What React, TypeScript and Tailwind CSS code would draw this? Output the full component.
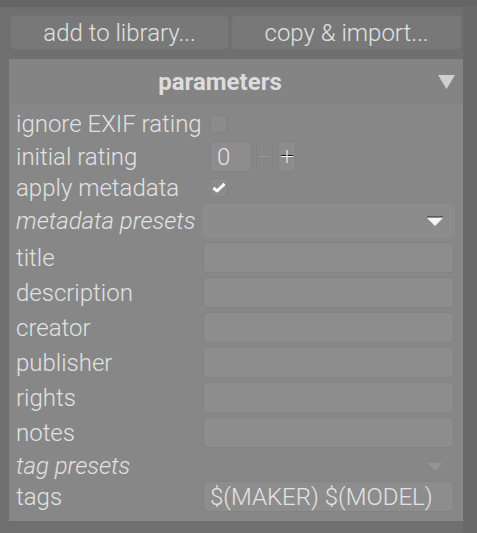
import React from 'react';

const ROW = 'flex items-center h-[31px]';

function Label({ children, italic = false }: { children: React.ReactNode; italic?: boolean }) {
    return (
        <span className={`w-[186px] shrink-0 whitespace-nowrap text-[24px] leading-none text-[#e2e2e2] ${italic ? 'italic' : ''}`}>
            {children}
        </span>
    );
}

function Entry({ value = '' }: { value?: string }) {
    return (
        <div className="ml-[1px] flex-1 h-full mr-[1px] rounded-[4px] bg-[#8d8d8d] border border-[#838383] flex items-center px-[6px] text-[24px] text-[#e4e4e4] whitespace-nowrap">
            {value}
        </div>
    );
}

function DropArrow({ dim = false }: { dim?: boolean }) {
    return (
        <svg width="16" height="10" viewBox="0 0 16 10">
            {!dim && <rect x="0" y="0" width="16" height="1" fill="#5a5a5a" />}
            <polygon points="0,2 16,2 8,10" fill={dim ? '#939393' : '#f4f4f4'} />
        </svg>
    );
}

export default function App() {
    const fields = ['title', 'description', 'creator', 'publisher', 'rights', 'notes'];

    return (
        <div className="w-[477px] h-[533px] bg-[#6f6f6f] flex flex-col font-['Roboto',sans-serif] font-light overflow-hidden">
            <div className="h-[7px] bg-[#656565] shrink-0" />

            <div className="flex flex-1">
                <div className="w-[463px] flex flex-col">
                    {/* import buttons */}
                    <div className="flex gap-[2px] pl-[10px] pr-[1px] mt-[8px]">
                        <button className="w-[219px] h-[35px] rounded-[5px] bg-[#787878] border border-[#727272] text-[24px] leading-none text-[#e2e2e2] font-light">
                            add to library...
                        </button>
                        <button className="flex-1 h-[35px] rounded-[5px] bg-[#787878] border border-[#727272] text-[24px] leading-none text-[#e2e2e2] font-light">
                            copy &amp; import...
                        </button>
                    </div>

                    {/* parameters panel */}
                    <div className="ml-[9px] mt-[9px] flex flex-col">
                        <div className="h-[45px] bg-[#848484] flex items-center">
                            <span className="flex-1 text-center text-[24px] leading-none font-bold text-[#dddddd] pl-[1px]">parameters</span>
                            <span className="w-[33px] flex justify-end pr-[8px]">
                                <svg width="17" height="14" viewBox="0 0 17 14">
                                    <polygon points="0,0 17,0 8.5,14" fill="#cfcfcf" />
                                </svg>
                            </span>
                        </div>

                        <div className="bg-[#878787] flex flex-col pl-[7px] pt-[4px] pb-[9px] pr-[8px]">
                            <div className={ROW}>
                                <Label>ignore EXIF rating</Label>
                                <div className="ml-[8px] w-[18px] h-[18px] rounded-[3px] bg-[#8b8b8b] border border-[#818181]" />
                            </div>

                            <div className={`${ROW} mt-[2px]`}>
                                <Label>initial rating</Label>
                                <div className="ml-[8px] w-[42px] h-full rounded-[4px] bg-[#8d8d8d] border border-[#838383] flex items-center pl-[6px] text-[24px] text-[#e4e4e4]">
                                    0
                                </div>
                                <div className="ml-[4px] w-[17px] h-full rounded-[4px] bg-[#878787] border border-[#828282] flex items-center justify-center">
                                    <div className="w-[11px] h-[1px] bg-[#999999]" />
                                </div>
                                <div className="ml-[5px] w-[18px] h-full rounded-[4px] bg-[#8c8c8c] border border-[#838383] flex items-center justify-center">
                                    <svg width="12" height="13" viewBox="0 0 12 13">
                                        <rect x="0" y="5" width="12" height="1" fill="#111111" />
                                        <rect x="0" y="6" width="12" height="1" fill="#ffffff" />
                                        <rect x="5.5" y="0" width="1" height="13" fill="#ffffff" />
                                    </svg>
                                </div>
                            </div>

                            <div className={ROW}>
                                <Label>apply metadata</Label>
                                <div className="ml-[8px] w-[18px] h-[19px] rounded-[3px] bg-[#8b8b8b] border border-[#818181] flex items-center justify-center">
                                    <svg width="14" height="11" viewBox="0 0 14 11">
                                        <path d="M1.5 5.8 L5 9 L12.5 1.8" stroke="#ffffff" strokeWidth="3" fill="none" strokeLinejoin="round" />
                                    </svg>
                                </div>
                            </div>

                            <div className="flex items-center h-[34px] mt-[1px]">
                                <Label italic>metadata presets</Label>
                                <div className="flex-1 h-full rounded-[5px] bg-[#8c8c8c] flex items-center justify-end pr-[12px]">
                                    <DropArrow />
                                </div>
                            </div>

                            {fields.map((f) => (
                                <div key={f} className={`${ROW} mt-[4px]`}>
                                    <Label>{f}</Label>
                                    <Entry />
                                </div>
                            ))}

                            <div className="flex items-center h-[27px] mt-[4px]">
                                <Label italic>tag presets</Label>
                                <div className="flex-1 flex justify-end pr-[12px]">
                                    <DropArrow dim />
                                </div>
                            </div>

                            <div className={`${ROW} mt-[2px]`}>
                                <Label>tags</Label>
                                <Entry value="$(MAKER) $(MODEL)" />
                            </div>
                        </div>
                    </div>
                </div>
                <div className="flex-1 bg-[#6a6a6a]" />
            </div>
        </div>
    );
}
